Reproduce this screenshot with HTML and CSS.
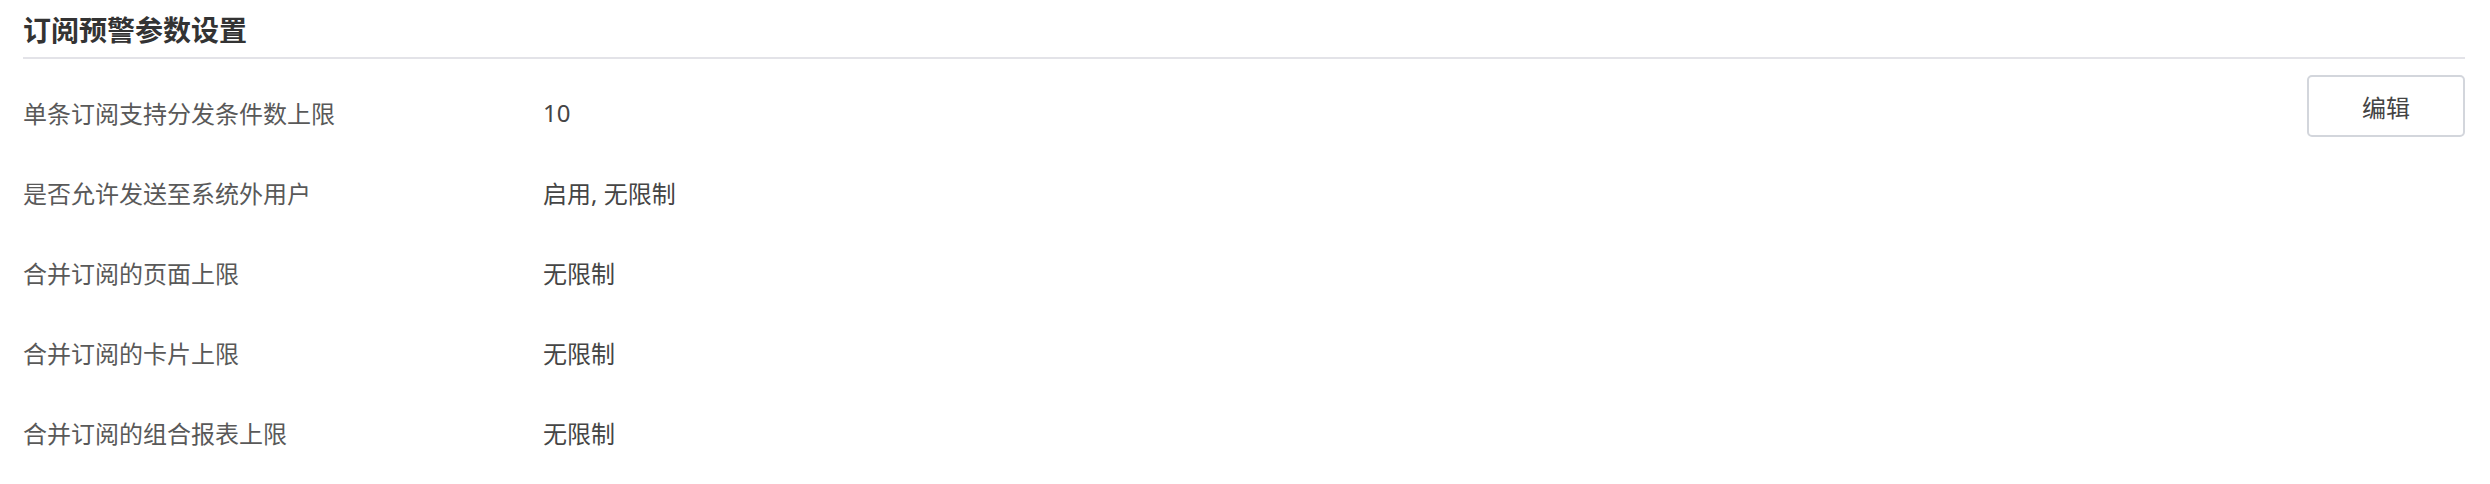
FILE: index.html
```html
<!DOCTYPE html>
<html lang="zh-CN">
<head>
    <meta charset="UTF-8">
    <title>订阅预警参数设置</title>
    <link rel="stylesheet" href="styles.css">
</head>
<body>
    <div class="panel">
        <div class="panel-header">
            <h2>订阅预警参数设置</h2>
        </div>
        <div class="settings">
            <div class="row">
                <div class="label">单条订阅支持分发条件数上限</div>
                <div class="value">10</div>
                <button class="edit-btn">编辑</button>
            </div>
            <div class="row">
                <div class="label">是否允许发送至系统外用户</div>
                <div class="value">启用, 无限制</div>
            </div>
            <div class="row">
                <div class="label">合并订阅的页面上限</div>
                <div class="value">无限制</div>
            </div>
            <div class="row">
                <div class="label">合并订阅的卡片上限</div>
                <div class="value">无限制</div>
            </div>
            <div class="row">
                <div class="label">合并订阅的组合报表上限</div>
                <div class="value">无限制</div>
            </div>
        </div>
    </div>
</body>
</html>
```

FILE: styles.css
```css
body {
    margin: 0;
    padding: 0 25px 0 23px;
    background-color: #fff;
    font-family: "Noto Sans", "Noto Sans CJK SC", sans-serif;
    color: #555;
}
.panel-header {
    padding: 12px 0 9px;
    border-bottom: 2px solid #e3e3e8;
}
.panel-header h2 {
    margin: 0;
    font-size: 28px;
    line-height: 36px;
    font-weight: bold;
    color: #333;
}
.settings {
    padding-top: 13px;
}
.row {
    display: flex;
    align-items: center;
    height: 80px;
    font-size: 24px;
}
.label {
    width: 520px;
    color: #595959;
}
.value {
    flex: 1;
    color: #454545;
}
.edit-btn {
    align-self: flex-start;
    margin-top: 3px;
    width: 158px;
    height: 62px;
    background-color: #fff;
    border: 2px solid #d3d6dc;
    border-radius: 5px;
    font-family: inherit;
    font-size: 24px;
    color: #444;
    cursor: pointer;
}
.edit-btn:hover {
    border-color: #aab0ba;
}
```
